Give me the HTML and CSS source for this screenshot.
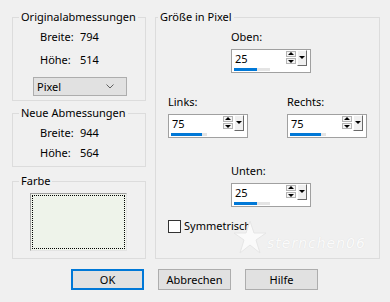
FILE: index.html
```html
<!DOCTYPE html>
<html lang="de">
<head>
    <meta charset="UTF-8">
    <title>Randfarbe hinzufügen</title>
    <link rel="stylesheet" href="styles.css">
</head>
<body>

    <div class="dialog">
        <div class="columns">
            <div class="col-left">
                <div class="group group-orig">
                    <div class="group-title">Originalabmessungen</div>
                    <div class="dim-row first"><span class="dim-label">Breite:</span><span>794</span></div>
                    <div class="dim-row"><span class="dim-label">Höhe:</span><span>514</span></div>
                    <div class="select">
                        <span>Pixel</span>
                        <svg width="8" height="5" viewBox="0 0 8 5"><path d="M0.5 0.5 L4 4 L7.5 0.5" fill="none" stroke="#606060" stroke-width="1"/></svg>
                    </div>
                </div>

                <div class="group group-new">
                    <div class="group-title">Neue Abmessungen</div>
                    <div class="dim-row first"><span class="dim-label">Breite:</span><span>944</span></div>
                    <div class="dim-row"><span class="dim-label">Höhe:</span><span>564</span></div>
                </div>

                <div class="group group-color">
                    <div class="group-title">Farbe</div>
                    <div class="swatch"><div class="swatch-inner"></div></div>
                </div>
            </div>

            <div class="group group-size">
                <div class="group-title">Größe in Pixel</div>

                <div class="field field-top">
                    <div class="field-label">Oben:</div>
                    <div class="spin">
                        <div class="spin-value">
                            <span>25</span>
                            <div class="track"><div class="track-fill" style="width: 23px"></div></div>
                        </div>
                        <div class="spin-ctrls">
                            <div class="arrows"><div class="arrow arrow-up"></div><div class="arrow arrow-down"></div></div>
                            <div class="drop"></div>
                        </div>
                    </div>
                </div>

                <div class="side-row">
                    <div class="field">
                        <div class="field-label">Links:</div>
                        <div class="spin">
                            <div class="spin-value">
                                <span>75</span>
                                <div class="track"><div class="track-fill" style="width: 31px"></div></div>
                            </div>
                            <div class="spin-ctrls">
                                <div class="arrows"><div class="arrow arrow-up"></div><div class="arrow arrow-down"></div></div>
                                <div class="drop"></div>
                            </div>
                        </div>
                    </div>
                    <div class="field">
                        <div class="field-label">Rechts:</div>
                        <div class="spin">
                            <div class="spin-value">
                                <span>75</span>
                                <div class="track"><div class="track-fill" style="width: 31px"></div></div>
                            </div>
                            <div class="spin-ctrls">
                                <div class="arrows"><div class="arrow arrow-up"></div><div class="arrow arrow-down"></div></div>
                                <div class="drop"></div>
                            </div>
                        </div>
                    </div>
                </div>

                <div class="field field-bottom">
                    <div class="field-label">Unten:</div>
                    <div class="spin">
                        <div class="spin-value">
                            <span>25</span>
                            <div class="track"><div class="track-fill" style="width: 23px"></div></div>
                        </div>
                        <div class="spin-ctrls">
                            <div class="arrows"><div class="arrow arrow-up"></div><div class="arrow arrow-down"></div></div>
                            <div class="drop"></div>
                        </div>
                    </div>
                </div>

                <label class="check">
                    <span class="check-box"></span>
                    <span>Symmetrisch</span>
                </label>

                <!-- watermark from the original screenshot -->
                <div class="watermark">
                    <svg width="34" height="34" viewBox="0 0 34 34"><path d="M17 1 L21 13 L33 13 L23 20 L27 33 L17 25 L7 33 L11 20 L1 13 L13 13 Z" fill="#fafafa" stroke="#e6e6e6" stroke-width="1"/></svg>
                    <span>sternchen06</span>
                </div>
            </div>
        </div>

        <div class="buttons">
            <button class="btn btn-default">OK</button>
            <button class="btn">Abbrechen</button>
            <button class="btn">Hilfe</button>
        </div>
    </div>

</body>
</html>
```

FILE: styles.css
```css
* {
    margin: 0;
    padding: 0;
    box-sizing: border-box;
}

body {
    font-family: 'Noto Sans', sans-serif;
    font-size: 11px;
    color: #000000;
    background: #f0f0f0;
    width: 390px;
    height: 302px;
    overflow: hidden;
}

.dialog {
    padding: 17px 10px 0 12px;
}

.columns {
    display: flex;
    gap: 9px;
}

.col-left {
    width: 134px;
}

/* Group boxes */
.group {
    border: 1px solid #dcdcdc;
}

.group-title {
    width: fit-content;
    margin: -8px 0 0 6px;
    padding: 0 2px;
    line-height: 14px;
    background: #f0f0f0;
}

.group-orig {
    height: 84px;
}

.group-new {
    height: 54px;
    margin-top: 12px;
}

.group-color {
    height: 78px;
    margin-top: 14px;
}

.dim-row {
    display: flex;
    padding-left: 27px;
    line-height: 23px;
}

.dim-row.first {
    margin-top: 1px;
}

.group-new .dim-row {
    line-height: 20px;
}

.group-new .dim-row.first {
    margin-top: 3px;
}

.dim-label {
    width: 40px;
}

.select {
    display: flex;
    align-items: center;
    justify-content: space-between;
    width: 94px;
    height: 19px;
    margin: 6px 0 0 20px;
    padding: 0 12px 0 3px;
    background: #e1e1e1;
    border: 1px solid #adadad;
}

.swatch {
    width: 97px;
    height: 58px;
    margin: 5px 0 0 17px;
    padding: 1px;
    border: 1px solid #a0a0a0;
    border-right-color: #e3e3e3;
    border-bottom-color: #e3e3e3;
    background: #eef3ea;
}

.swatch-inner {
    height: 100%;
    border: 1px dotted #000000;
}

/* Right group */
.group-size {
    position: relative;
    flex: 1;
    height: 242px;
}

.group-size .group-title {
    margin-left: 2px;
}

.field-label {
    line-height: 16px;
    margin-bottom: 4px;
}

.field-top {
    margin: 5px 0 0 75px;
}

.side-row {
    display: flex;
    gap: 39px;
    margin: 21px 0 0 12px;
}

.field-bottom {
    margin: 25px 0 0 75px;
}

.spin {
    display: flex;
    width: 80px;
    height: 24px;
    border: 1px solid #a0a0a0;
    background: #ffffff;
}

.spin-value {
    flex: 1;
    padding: 1px 0 0 3px;
    line-height: 16px;
}

.track {
    width: 36px;
    height: 3px;
    margin: 1px 0 0 -1px;
    background: #e4e4e4;
}

.track-fill {
    height: 100%;
    background: #0078d7;
}

.spin-ctrls {
    display: flex;
    gap: 1px;
    padding: 0 3px 0 0;
}

.arrows {
    display: flex;
    flex-direction: column;
    gap: 1px;
    width: 10px;
    padding-top: 1px;
}

.arrow {
    position: relative;
    height: 6px;
    border: 1px solid #b4b4b4;
    background: #f4f4f4;
}

.arrow::after {
    content: "";
    position: absolute;
    left: 1px;
    border-left: 3px solid transparent;
    border-right: 3px solid transparent;
}

.arrow-up::after {
    top: 0;
    border-bottom: 3px solid #000000;
}

.arrow-down::after {
    top: 1px;
    border-top: 3px solid #000000;
}

.drop {
    position: relative;
    width: 10px;
    height: 16px;
    background: #f0f0f0;
    border-top: 1px solid #ffffff;
    border-left: 1px solid #ffffff;
    border-right: 1px solid #696969;
    border-bottom: 1px solid #696969;
}

.drop::after {
    content: "";
    position: absolute;
    top: 5px;
    left: 1px;
    border-left: 3px solid transparent;
    border-right: 3px solid transparent;
    border-top: 3px solid #000000;
}

.check {
    display: flex;
    align-items: center;
    gap: 3px;
    margin: 11px 0 0 12px;
    line-height: 16px;
}

.check-box {
    width: 13px;
    height: 13px;
    border: 1px solid #333333;
    background: #ffffff;
}

.watermark {
    position: absolute;
    left: 77px;
    top: 202px;
    display: flex;
    align-items: flex-end;
    gap: 0;
}

.watermark span {
    margin-bottom: 2px;
    font-family: 'DejaVu Sans', sans-serif;
    font-size: 14px;
    font-style: italic;
    letter-spacing: 1px;
    line-height: 18px;
    color: #fbfbfb;
    text-shadow: 0 0 1px #d8d8d8;
}

/* Buttons */
.buttons {
    display: flex;
    justify-content: center;
    gap: 14px;
    margin: 10px 0 0 -3px;
}

.btn {
    width: 73px;
    height: 21px;
    font-family: 'Noto Sans', sans-serif;
    font-size: 11px;
    color: #000000;
    background: #e1e1e1;
    border: 1px solid #adadad;
}

.btn-default {
    border: 2px solid #0078d7;
}
```
